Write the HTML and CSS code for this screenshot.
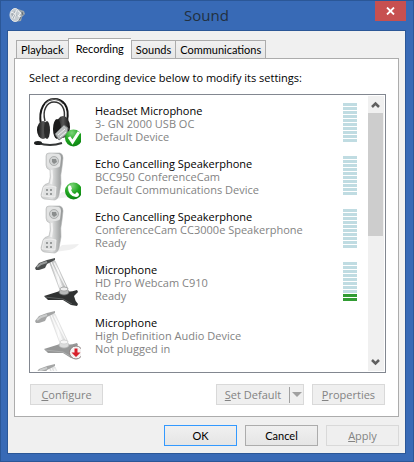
FILE: index.html
```html
<!DOCTYPE html>
<html lang="en">
<head>
<meta charset="utf-8">
<title>Sound</title>
<link rel="stylesheet" href="styles.css">
</head>
<body>
<svg class="defs" width="0" height="0" aria-hidden="true">
  <defs>
    <linearGradient id="silver" x1="0" x2="1"><stop offset="0" stop-color="#c9caca"/><stop offset=".5" stop-color="#dfe0e0"/><stop offset="1" stop-color="#8d9090"/></linearGradient>
    <linearGradient id="steel" x1="0" x2="1"><stop offset="0" stop-color="#b4b6b6"/><stop offset=".5" stop-color="#fafafa"/><stop offset="1" stop-color="#a4a6a6"/></linearGradient>
    <linearGradient id="black" x1="0" x2="1"><stop offset="0" stop-color="#0c0c0c"/><stop offset=".5" stop-color="#555"/><stop offset="1" stop-color="#111"/></linearGradient>
    <radialGradient id="green" cx=".4" cy=".2" r=".9"><stop offset="0" stop-color="#7ed67a"/><stop offset=".5" stop-color="#1fa51f"/><stop offset="1" stop-color="#087c10"/></radialGradient>
    <g id="handset">
      <path d="M22 49 29 42 46 41Q42 46 36 47Z" fill="#efefef"/>
      <path d="M13 6Q13 3 16 3L27 3Q30 4 30 8L29 17Q27 25 28 34L26 45Q25 49 22 50L11 49Q8 48 8 45L10 37Q11 34 16 33Q18 27 17 20Q13 19 13 15Z" fill="url(#silver)" stroke="#b4b6b6" stroke-width=".6"/>
      <path d="M18.500 20Q20 27 18 34" fill="none" stroke="#f2f2f2" stroke-width="2"/>
      <path d="M14 6Q14 4 17 4L26 4Q28 5 28 8L27 16Q26 18 20 18 14 18 14 14Z" fill="#e2e3e3"/>
      <circle cx="21" cy="11" r="4.500" fill="#d0d2d2" stroke="#a2a4a4" stroke-width=".8"/>
      <path d="M19 9h4l1 3-3 2-2-2Z" fill="#8b8e8e"/>
      <path d="M11 37Q17 35 23 37L22 47 9 46Z" fill="#e0e1e1" stroke="#f2f2f2" stroke-width=".8"/>
      <path d="M13 39h2v2h-2zM17 39h2v2h-2zM13 43h2v2h-2zM17 43h2v2h-2z" fill="#999c9c"/>
    </g>
    <g id="mic">
      <path d="M16 5 22 5 35 33 27 34Z" fill="url(#steel)" stroke="#adafaf" stroke-width=".6"/>
      <path d="M18 6 29 32M21 7 33 31" stroke="#fafafa" fill="none"/>
      <path d="M19.500 6 31 31" stroke="#b4b6b6" stroke-width=".6" fill="none"/>
      <path d="M2 12 6 7 14 4 22 2 22 4 14 8 12 12 6 14 3 14Z" fill="#4b4e4e"/>
      <path d="M4 11 8 8 14 6" stroke="#979a9a" stroke-width="2" fill="none"/>
      <path d="M11 40 27 35Q37 37 44 34L45 36 41 40Q42 45 45 48L44 50 38 49 30 44 15 44Z" fill="#303232"/>
      <path d="M12 41 30 43 39 48" stroke="#666969" stroke-width=".8" fill="none"/>
      <ellipse cx="31" cy="36" rx="5" ry="3" fill="#b8baba" stroke="#696c6c" stroke-width=".8"/>
      <ellipse cx="31" cy="33" rx="4" ry="2" fill="#eee" stroke="#9a9c9c" stroke-width=".8"/>
    </g>
  </defs>
</svg>
<main class="window">
  <header class="titlebar">
    <svg class="app-icon" viewBox="0 0 16 18" aria-hidden="true">
      <path d="M5 2 9 3 15 5 16 8 13 11 12 15 6 16Z" fill="#9aa4ac"/>
      <ellipse cx="6" cy="9" rx="5" ry="6.500" fill="#c5ccd1" stroke="#dfe3e6"/>
      <path d="M2 8 6 5 8 9 5 13Z" fill="#a3acb3"/>
      <path d="M2 6 7 8 5 13M9 5l3 2-3 3 3 1-3 3M3 12 8 4" stroke="#eef0f1" fill="none"/>
      <path d="M13 6 14 9M10 14l2-3" stroke="#626c75" fill="none"/>
    </svg>
    <h1>Sound</h1>
    <button class="close" type="button" aria-label="Close"><svg viewBox="0 0 9 8" aria-hidden="true"><path d="M1 .5 8 7.500M8 .5 1 7.500" stroke="#fff" stroke-width="1.800"/></svg></button>
  </header>
  <section class="client">
    <div class="tabs" role="tablist">
      <button type="button" role="tab" class="tab">Playback</button>
      <button type="button" role="tab" class="tab active" aria-selected="true">Recording</button>
      <button type="button" role="tab" class="tab">Sounds</button>
      <button type="button" role="tab" class="tab">Communications</button>
    </div>
    <div class="panel" role="tabpanel">
      <p class="prompt">Select a recording device below to modify its settings:</p>
      <div class="listbox">
        <ul class="devices">
          <li class="device">
            <svg class="icon" viewBox="0 0 48 52" aria-hidden="true">
              <path d="M8 28C5 12 12 2 21 2S37 9 34 24" fill="none" stroke="#171717" stroke-width="2"/>
              <path d="M12 24C9 13 14 5 21 5S33 11 31 22" fill="none" stroke="#333" stroke-width="1.500"/>
              <path d="M12 7Q16 2 21 2T30 7" fill="none" stroke="#777"/>
              <ellipse cx="10" cy="33" rx="6" ry="9" fill="url(#black)"/>
              <ellipse cx="14" cy="33" rx="3" ry="9" fill="#2c2c2c"/>
              <ellipse cx="30" cy="30" rx="7" ry="11" fill="url(#black)"/>
              <ellipse cx="24" cy="32" rx="4" ry="10" fill="#1b1b1b"/>
              <path d="M22 37 31 28 35 31 34 37 26 43Z" fill="#b9bdbd" stroke="#747878"/>
              <path d="M25 38l7-6M27 40l6-5" stroke="#f0f1f1"/>
              <path d="M5 46Q17 50 29 46" fill="none" stroke="#353737" stroke-width="2"/>
              <ellipse cx="5" cy="46" rx="4" ry="2" fill="#1d1f1f"/>
              <circle cx="40.500" cy="41" r="8.500" fill="url(#green)"/>
              <path d="M36 40 39.500 45 46 35" fill="none" stroke="#fff" stroke-width="3"/>
            </svg>
            <div class="info"><h2>Headset Microphone</h2><p>3- GN 2000 USB OC</p><p>Default Device</p></div>
            <div class="meter"><i></i><i></i><i></i><i></i><i></i><i></i><i></i><i></i><i></i><i></i></div>
          </li>
          <li class="device">
            <svg class="icon" viewBox="0 0 48 52" aria-hidden="true">
              <use href="#handset"/>
              <circle cx="40.500" cy="41" r="8.500" fill="url(#green)"/>
              <path d="M35 37Q36 34 38 36L39 39 38 40Q39 43 42 44L44 42 46 44Q46 47 43 47Q35 46 35 37Z" fill="#fff"/>
            </svg>
            <div class="info"><h2>Echo Cancelling Speakerphone</h2><p>BCC950 ConferenceCam</p><p>Default Communications Device</p></div>
            <div class="meter"><i></i><i></i><i></i><i></i><i></i><i></i><i></i><i></i><i></i><i></i></div>
          </li>
          <li class="device">
            <svg class="icon" viewBox="0 0 48 52" aria-hidden="true"><use href="#handset"/></svg>
            <div class="info"><h2>Echo Cancelling Speakerphone</h2><p>ConferenceCam CC3000e Speakerphone</p><p>Ready</p></div>
            <div class="meter"><i></i><i></i><i></i><i></i><i></i><i></i><i></i><i></i><i></i><i></i></div>
          </li>
          <li class="device">
            <svg class="icon" viewBox="0 0 48 52" aria-hidden="true"><use href="#mic"/></svg>
            <div class="info"><h2>Microphone</h2><p>HD Pro Webcam C910</p><p>Ready</p></div>
            <div class="meter"><i></i><i></i><i></i><i></i><i></i><i></i><i></i><i></i><i class="on"></i><i class="on"></i></div>
          </li>
          <li class="device">
            <svg class="icon" viewBox="0 0 48 52" aria-hidden="true">
              <use href="#mic" opacity=".5"/>
              <circle cx="43" cy="43.500" r="6.500" fill="#f4f2f2" stroke="#8c8080"/>
              <path d="M41.500 39.500h3v4h3l-4.500 4.500-4.500-4.500h3Z" fill="#d81f2a"/>
            </svg>
            <div class="info"><h2>Microphone</h2><p>High Definition Audio Device</p><p>Not plugged in</p></div>
          </li>
          <li class="device"><svg class="icon" viewBox="0 0 48 52" aria-hidden="true"><use href="#mic" opacity=".5"/></svg></li>
        </ul>
        <div class="scrollbar" aria-hidden="true">
          <svg class="arrow" viewBox="0 0 15 17"><path d="M4 11 7.500 7.500 11 11" fill="none" stroke="#606060" stroke-width="2.500"/></svg>
          <div class="track"><div class="thumb"></div></div>
          <svg class="arrow" viewBox="0 0 15 17"><path d="M4 6 7.500 9.500 11 6" fill="none" stroke="#606060" stroke-width="2.500"/></svg>
        </div>
      </div>
      <div class="actions">
        <button type="button" class="btn" disabled><u>C</u>onfigure</button>
        <span class="spacer"></span>
        <button type="button" class="btn split" disabled><span><u>S</u>et Default</span><svg viewBox="0 0 14 16" aria-hidden="true"><path d="M.5 0v16" stroke="#a0a0a0"/><path d="M3 5h10L8 10Z" fill="#a0a0a0"/></svg></button>
        <button type="button" class="btn" disabled><u>P</u>roperties</button>
      </div>
    </div>
    <footer class="dialog-buttons">
      <button type="button" class="btn default">OK</button>
      <button type="button" class="btn">Cancel</button>
      <button type="button" class="btn" disabled><u>A</u>pply</button>
    </footer>
  </section>
</main>
</body>
</html>
```
FILE: styles.css
```css
* { box-sizing: border-box; }
body { margin: 0; font: 11px/13px "Open Sans", "Noto Sans", sans-serif; color: #000; }
h1, h2, p, ul { margin: 0; padding: 0; font-weight: 400; }
button { font: inherit; color: inherit; padding: 0; margin: 0; }
.defs { display: block; }
.window {
  display: flex; flex-direction: column; min-height: 100vh;
  padding: 0 7px 7px 6px; background: #386ab6; border: 1px solid #2b5797;
}
.titlebar { display: grid; grid-template-columns: 46px 1fr 46px; height: 29px; }
.app-icon { width: 16px; height: 18px; margin: 5px 0 0 2px; }
h1 { font-size: 15px; line-height: 29px; text-align: center; color: #22303f; }
.close {
  width: 31px; height: 20px; border: 0; background: #c75050;
  justify-self: end; display: grid; place-items: center;
}
.close svg { width: 9px; height: 8px; }
.client {
  flex: 1; display: flex; flex-direction: column;
  border: 1px solid #2b5797; background: #f0f0f0; padding: 7px 6px;
}
.tabs { display: flex; align-items: flex-end; padding-left: 2px; height: 20px; }
.tab {
  height: 18px; padding: 0 4px; border: 1px solid #acacac; border-bottom: 0;
  border-right-width: 0; background: linear-gradient(#f0f0f0, #e7e7e7);
  font-family: Lato, "Open Sans", sans-serif; font-size: 11px;
}
.tab:last-child { border-right-width: 1px; }
.tab.active { height: 21px; padding: 0 7px 2px; margin-bottom: -1px; background: #fff; position: relative; }
.panel { flex: 1; border: 1px solid #acacac; background: #fff; padding: 12px 12px 11px 14px; display: flex; flex-direction: column; }
.prompt { margin-bottom: 10px; font-weight: 500; }
.listbox { flex: 1; min-height: 279px; height: 279px; border: 1px solid #828790; display: flex; padding: 1px; overflow: hidden; }
.devices { list-style: none; flex: 1; padding: 1px 11px 0 2px; overflow: hidden; height: 275px; }
.device { display: flex; height: 53px; }
.icon { width: 48px; height: 52px; flex: none; }
.info { flex: 1; padding: 7px 0 0 14px; color: #838383; white-space: nowrap; }
.info h2 { font-size: 11px; line-height: 13px; font-weight: 500; color: #000; }
.meter { display: flex; flex-direction: column; gap: 1px; width: 14px; padding-top: 6px; }
.meter i { height: 3px; background: #c0dce2; }
.meter .on { background: #319c33; }
.scrollbar { width: 16px; display: flex; flex-direction: column; background: #f0f0f0; }
.arrow { width: 15px; height: 17px; flex: none; }
.track { flex: 1; }
.thumb { width: 15px; height: 51%; background: #cdcdcd; }
.actions { display: flex; gap: 8px; margin-top: 11px; padding: 0 1px; }
.spacer { flex: 1; }
.btn {
  width: 73px; height: 21px; border: 1px solid #acacac;
  background: linear-gradient(#f0f0f0, #e5e5e5); line-height: 19px;
}
.btn:disabled { background: #efefef; border-color: #d9d9d9; color: #838383; }
.btn.default { border-color: #3399ff; }
.split { width: 88px; display: flex; align-items: center; }
.split span { flex: 1; }
.split svg { width: 14px; height: 16px; }
.dialog-buttons { display: flex; justify-content: flex-end; gap: 8px; padding-top: 8px; }
.dialog-buttons .btn:enabled { font-family: Lato, "Open Sans", sans-serif; }
```
